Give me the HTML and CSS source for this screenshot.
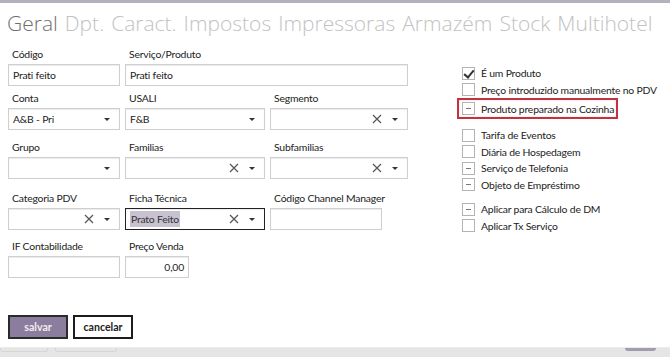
FILE: index.html
```html
<!DOCTYPE html>
<html lang="pt">
<head>
    <meta charset="UTF-8">
    <title>Produto</title>
    <link rel="stylesheet" href="styles.css">
</head>
<body>
    <div class="topo"></div>

    <nav class="abas">
        <span class="aba ativa">Geral</span>
        <span class="aba">Dpt.</span>
        <span class="aba">Caract.</span>
        <span class="aba">Impostos</span>
        <span class="aba">Impressoras</span>
        <span class="aba">Armazém</span>
        <span class="aba">Stock</span>
        <span class="aba">Multihotel</span>
    </nav>

    <main class="conteudo">
        <section class="formulario">
            <div class="campo">
                <label>Código</label>
                <div class="caixa">Prati feito</div>
            </div>
            <div class="campo largo">
                <label>Serviço/Produto</label>
                <div class="caixa">Prati feito</div>
            </div>

            <div class="campo">
                <label>Conta</label>
                <div class="caixa lista">A&amp;B - Pri <span class="seta"></span></div>
            </div>
            <div class="campo">
                <label>USALI</label>
                <div class="caixa lista">F&amp;B <span class="seta"></span></div>
            </div>
            <div class="campo">
                <label>Segmento</label>
                <div class="caixa lista"><svg class="limpar" viewBox="0 0 10 10"><path d="M1 1L9 9M9 1L1 9"/></svg><span class="seta"></span></div>
            </div>

            <div class="campo">
                <label>Grupo</label>
                <div class="caixa lista"><span class="seta"></span></div>
            </div>
            <div class="campo">
                <label>Familias</label>
                <div class="caixa lista"><svg class="limpar" viewBox="0 0 10 10"><path d="M1 1L9 9M9 1L1 9"/></svg><span class="seta"></span></div>
            </div>
            <div class="campo">
                <label>Subfamilias</label>
                <div class="caixa lista"><svg class="limpar" viewBox="0 0 10 10"><path d="M1 1L9 9M9 1L1 9"/></svg><span class="seta"></span></div>
            </div>

            <div class="campo">
                <label>Categoria PDV</label>
                <div class="caixa lista"><svg class="limpar" viewBox="0 0 10 10"><path d="M1 1L9 9M9 1L1 9"/></svg><span class="seta"></span></div>
            </div>
            <div class="campo">
                <label>Ficha Técnica</label>
                <div class="caixa lista foco"><span class="selecionado">Prato Feito</span><svg class="limpar" viewBox="0 0 10 10"><path d="M1 1L9 9M9 1L1 9"/></svg><span class="seta"></span></div>
            </div>
            <div class="campo">
                <label>Código Channel Manager</label>
                <div class="caixa curta"></div>
            </div>

            <div class="campo">
                <label>IF Contabilidade</label>
                <div class="caixa"></div>
            </div>
            <div class="campo">
                <label>Preço Venda</label>
                <div class="caixa preco">0,00</div>
            </div>
        </section>

        <section class="opcoes">
            <div class="opcao"><span class="check marcado"></span>É um Produto</div>
            <div class="opcao"><span class="check"></span>Preço introduzido manualmente no PDV</div>
            <div class="opcao destaque"><span class="check meio"></span>Produto preparado na Cozinha</div>

            <div class="grupo">
                <div class="opcao"><span class="check"></span>Tarifa de Eventos</div>
                <div class="opcao"><span class="check"></span>Diária de Hospedagem</div>
                <div class="opcao"><span class="check meio"></span>Serviço de Telefonia</div>
                <div class="opcao"><span class="check meio"></span>Objeto de Empréstimo</div>
            </div>

            <div class="grupo">
                <div class="opcao"><span class="check meio"></span>Aplicar para Cálculo de DM</div>
                <div class="opcao"><span class="check"></span>Aplicar Tx Serviço</div>
            </div>
        </section>
    </main>

    <div class="botoes">
        <button class="salvar">salvar</button>
        <button class="cancelar">cancelar</button>
    </div>

    <footer class="rodape">
        <span class="aba-rodape"></span>
        <span class="aba-rodape"></span>
        <span class="puxador"></span>
    </footer>
</body>
</html>
```

FILE: styles.css
```css
*{
    box-sizing: border-box;
    margin: 0;
    padding: 0;
}

body{
    width: 670px;
    height: 357px;
    overflow: hidden;
    background: #fff;
    color: #222;
    font-family: Lato, "Open Sans", sans-serif;
    font-size: 10.4px;
    letter-spacing: -0.2px;
    position: relative;
}

.topo{
    height: 3px;
    background: #b5b0bd;
}

.abas{
    display: flex;
    gap: 7px;
    padding: 3px 0 0 7px;
    height: 43px;
    white-space: nowrap;
}

.aba{
    font-family: "Open Sans", sans-serif;
    font-size: 21px;
    font-weight: 300;
    letter-spacing: 0;
    color: #c2c2c2;
    line-height: 34px;
}

.aba.ativa{
    color: #6e6e6e;
}

.conteudo{
    display: flex;
}

.formulario{
    flex: none;
    display: grid;
    grid-template-columns: 112px 140px 138px;
    grid-template-rows: 44px 49px 51px 48px 40px;
    column-gap: 5px;
    padding-left: 8px;
    width: 449px;
}

.campo label{
    display: block;
    height: 16px;
    line-height: 16px;
    padding-left: 4px;
    margin-bottom: 2px;
}

.campo.largo{
    grid-column: span 2;
}

.caixa{
    height: 22px;
    border: 1px solid #cfcfcf;
    box-shadow: inset 0 1px 1px #ececec;
    display: flex;
    align-items: center;
    padding: 0 4px;
    line-height: 20px;
}

.caixa.curta{
    width: 112px;
}

.caixa.preco{
    width: 64px;
    justify-content: flex-end;
}

.limpar{
    width: 10px;
    height: 10px;
    margin-left: auto;
    margin-right: 10px;
    fill: none;
    stroke: #555;
    stroke-width: 1.2;
}

.seta{
    width: 0;
    height: 0;
    border-left: 3px solid transparent;
    border-right: 3px solid transparent;
    border-top: 3px solid #333;
    margin-left: auto;
    margin-right: 5px;
}

.limpar + .seta{
    margin-left: 0;
}

.caixa.foco{
    border: 1px solid #222;
}

.selecionado{
    background: #c7c1d0;
    color: #333;
    padding: 0 1px;
    line-height: 16px;
}

.opcoes{
    padding: 19px 0 0 9px;
}

.opcao{
    display: flex;
    align-items: center;
    height: 16.5px;
    gap: 6px;
    padding-left: 4px;
    white-space: nowrap;
}

.destaque{
    border: 2px solid #c3333f;
    box-shadow: inset 0 0 2px #f6c8d4;
    height: 21px;
    width: fit-content;
    padding: 0 2px 0 3px;
    margin-left: -1px;
}

.grupo{
    margin-top: 8px;
}

.check{
    width: 13px;
    height: 13px;
    border: 1px solid #b4b4b4;
    background: #fff;
    position: relative;
    flex: none;
}

.check.marcado::after{
    content: "";
    position: absolute;
    left: 3px;
    top: 0;
    width: 4px;
    height: 8px;
    border-right: 2px solid #333;
    border-bottom: 2px solid #333;
    transform: rotate(40deg);
}

.check.meio::after{
    content: "";
    position: absolute;
    left: 3px;
    top: 5px;
    width: 5px;
    height: 1px;
    background: #777;
}

.botoes{
    position: absolute;
    left: 8px;
    top: 315px;
    display: flex;
    gap: 5px;
}

button{
    width: 60px;
    height: 24px;
    font-family: Lato, "Open Sans", sans-serif;
    font-size: 10.6px;
    font-weight: 700;
    border: 2px solid #1c1c1c;
}

.salvar{
    background: #8b7d9d;
    color: #eee;
    border-color: #2b2b2b;
}

.cancelar{
    background: #fff;
    color: #222;
}

.rodape{
    position: absolute;
    left: 0;
    right: 0;
    bottom: 0;
    height: 10px;
    background: #e5e5e5;
    border-top: 1px solid #ececec;
    display: flex;
    gap: 7px;
}

.aba-rodape{
    width: 48px;
    height: 4px;
    border: 1px solid #d6d6d6;
    border-top: none;
    border-radius: 0 0 3px 3px;
}

.aba-rodape + .aba-rodape{
    width: 62px;
}

.puxador{
    position: absolute;
    left: 625px;
    top: 0;
    width: 31px;
    height: 3px;
    background: #a29cac;
    border-radius: 0 0 4px 4px;
}
```
